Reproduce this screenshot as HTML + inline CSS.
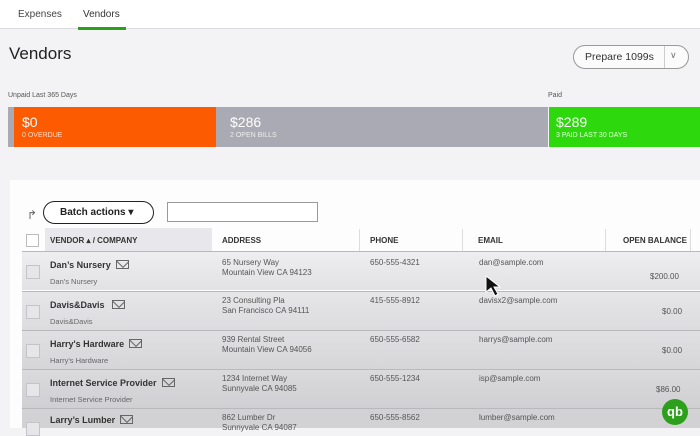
<!DOCTYPE html>
<html><head><style>
*{margin:0;padding:0;box-sizing:border-box}
body{width:700px;height:428px;overflow:hidden;background:#f3f3f5;font-family:"Liberation Sans",sans-serif;position:relative;color:#333}
.a{position:absolute;white-space:nowrap}
.row{position:absolute;left:22px;width:678px;height:39px;border-top:1px solid #b9b9bd}
.cb{position:absolute;left:4px;top:13px;width:14px;height:14px;border:1px solid #c4c4c8;background:#e6e6e8}
.nm{position:absolute;left:28px;top:8px;font-size:9px;font-weight:bold;color:#333}
.sub{position:absolute;left:28px;top:25px;font-size:7.5px;color:#666}
.env{display:inline-block;width:13px;height:9px;border:1px solid #666;margin-left:5px;vertical-align:-1px;position:relative;overflow:hidden}
.env:after{content:"";position:absolute;left:1px;top:-5px;width:8px;height:8px;border:1px solid #666;transform:rotate(45deg)}
.t{position:absolute;font-size:8px;color:#555;line-height:10px}
.h{font-size:8px;font-weight:bold;color:#333}
</style></head><body>
<div class="a" style="left:0;top:0;width:700px;height:29px;background:#fff;border-bottom:1px solid #dcdce0"></div>
<div class="a" style="left:18px;top:9px;font-size:10px;color:#444">Expenses</div>
<div class="a" style="left:83px;top:9px;font-size:10px;color:#333">Vendors</div>
<div class="a" style="left:78px;top:27px;width:48px;height:3px;background:#2ca01c"></div>
<div class="a" style="left:9px;top:44px;font-size:17px;color:#222">Vendors</div>
<div class="a" style="left:573px;top:45px;width:116px;height:24px;border:1px solid #999;border-radius:12px;background:#fbfbfb"></div>
<div class="a" style="left:585px;top:51px;font-size:10.5px;color:#333">Prepare 1099s</div>
<div class="a" style="left:664px;top:46px;width:1px;height:22px;background:#ccc"></div>
<div class="a" style="left:670px;top:50px;font-size:9px;color:#777">&#8744;</div>
<div class="a" style="left:8px;top:92px;font-size:7px;color:#555">Unpaid Last 365 Days</div>
<div class="a" style="left:548px;top:92px;font-size:7px;color:#555">Paid</div>
<div class="a" style="left:8px;top:107px;width:540px;height:40px;background:#a9aab3"></div>
<div class="a" style="left:14px;top:107px;width:202px;height:40px;background:#fd5b02"></div>
<div class="a" style="left:549px;top:107px;width:151px;height:40px;background:#2dd80c"></div>
<div class="a" style="left:22px;top:114px;font-size:14px;color:#fff">$0</div>
<div class="a" style="left:22px;top:132px;font-size:7px;color:#ffe0cc">0 OVERDUE</div>
<div class="a" style="left:230px;top:114px;font-size:14px;color:#fff">$286</div>
<div class="a" style="left:230px;top:132px;font-size:7px;color:#eee">2 OPEN BILLS</div>
<div class="a" style="left:556px;top:114px;font-size:14px;color:#fff">$289</div>
<div class="a" style="left:556px;top:132px;font-size:7px;color:#e8ffe0">3 PAID LAST 30 DAYS</div>
<div class="a" style="left:10px;top:180px;width:690px;height:248px;background:#fdfdfd"></div>
<div class="a" style="left:27px;top:208px;font-size:12px;color:#666">&#8625;</div>
<div class="a" style="left:43px;top:201px;width:111px;height:23px;border:1.5px solid #222;border-radius:12px;background:#fff"></div>
<div class="a" style="left:60px;top:207px;font-size:10px;font-weight:bold;color:#222">Batch actions &#9662;</div>
<div class="a" style="left:167px;top:202px;width:151px;height:20px;border:1px solid #999;background:#fff"></div>
<div class="a" style="left:45px;top:228px;width:167px;height:23px;background:#e8e8ec"></div>
<div class="a" style="left:26px;top:234px;width:13px;height:13px;border:1px solid #bbb;background:#fff"></div>
<div class="a h" style="left:50px;top:236px">VENDOR &#9652; / COMPANY</div>
<div class="a h" style="left:222px;top:236px">ADDRESS</div>
<div class="a h" style="left:370px;top:236px">PHONE</div>
<div class="a h" style="left:478px;top:236px">EMAIL</div>
<div class="a h" style="left:623px;top:236px">OPEN BALANCE</div>
<div class="a" style="left:359px;top:229px;width:1px;height:22px;background:#ddd"></div>
<div class="a" style="left:462px;top:229px;width:1px;height:22px;background:#ddd"></div>
<div class="a" style="left:605px;top:229px;width:1px;height:22px;background:#ddd"></div>
<div class="a" style="left:690px;top:229px;width:1px;height:22px;background:#ddd"></div>

<div class="row" style="top:251px;background:linear-gradient(#eeeef0,#e2e2e5)"><div class="cb"></div><div class="nm">Dan’s Nursery<span class="env"></span></div><div class="sub">Dan's Nursery</div>
<div class="t" style="left:200px;top:6px">65 Nursery Way<br>Mountain View CA 94123</div><div class="t" style="left:348px;top:6px">650-555-4321</div><div class="t" style="left:457px;top:6px">dan@sample.com</div><div class="t" style="left:628px;top:20px">$200.00</div></div>
<div class="row" style="top:291px;background:linear-gradient(#e6e6e9,#dcdcdf)"><div class="cb"></div><div class="nm">Davis&amp;Davis <span class="env"></span></div><div class="sub">Davis&amp;Davis</div>
<div class="t" style="left:200px;top:4px">23 Consulting Pla<br>San Francisco CA 94111</div><div class="t" style="left:348px;top:4px">415-555-8912</div><div class="t" style="left:457px;top:4px">davisx2@sample.com</div><div class="t" style="left:640px;top:15px">$0.00</div></div>
<div class="row" style="top:330px;background:linear-gradient(#e0e0e3,#d6d6d9)"><div class="cb"></div><div class="nm">Harry's Hardware<span class="env"></span></div><div class="sub">Harry's Hardware</div>
<div class="t" style="left:200px;top:4px">939 Rental Street<br>Mountain View CA 94056</div><div class="t" style="left:348px;top:4px">650-555-6582</div><div class="t" style="left:457px;top:4px">harrys@sample.com</div><div class="t" style="left:640px;top:15px">$0.00</div></div>
<div class="row" style="top:369px;background:linear-gradient(#dadadd,#d0d0d3)"><div class="cb"></div><div class="nm">Internet Service Provider<span class="env"></span></div><div class="sub">Internet Service Provider</div>
<div class="t" style="left:200px;top:4px">1234 Internet Way<br>Sunnyvale CA 94085</div><div class="t" style="left:348px;top:4px">650-555-1234</div><div class="t" style="left:457px;top:4px">isp@sample.com</div><div class="t" style="left:634px;top:15px">$86.00</div></div>
<div class="row" style="top:408px;height:20px;background:#d2d2d5"><div class="cb"></div><div class="nm" style="top:6px">Larry’s Lumber<span class="env"></span></div>
<div class="t" style="left:200px;top:4px">862 Lumber Dr<br>Sunnyvale CA 94087</div><div class="t" style="left:348px;top:4px">650-555-8562</div><div class="t" style="left:457px;top:4px">lumber@sample.com</div></div>

<svg class="a" style="left:484px;top:274px" width="22" height="26" viewBox="0 0 22 26"><path d="M2 2 L2 18 L7 14 L11 22 L14 20 L10 13 L16 13 Z" fill="#111" stroke="#fff" stroke-width="1"/></svg>
<div class="a" style="left:662px;top:399px;width:26px;height:26px;border-radius:50%;background:#2ca01c;color:#fff;font-size:13px;font-weight:bold;text-align:center;line-height:25px">qb</div>
</body></html>
